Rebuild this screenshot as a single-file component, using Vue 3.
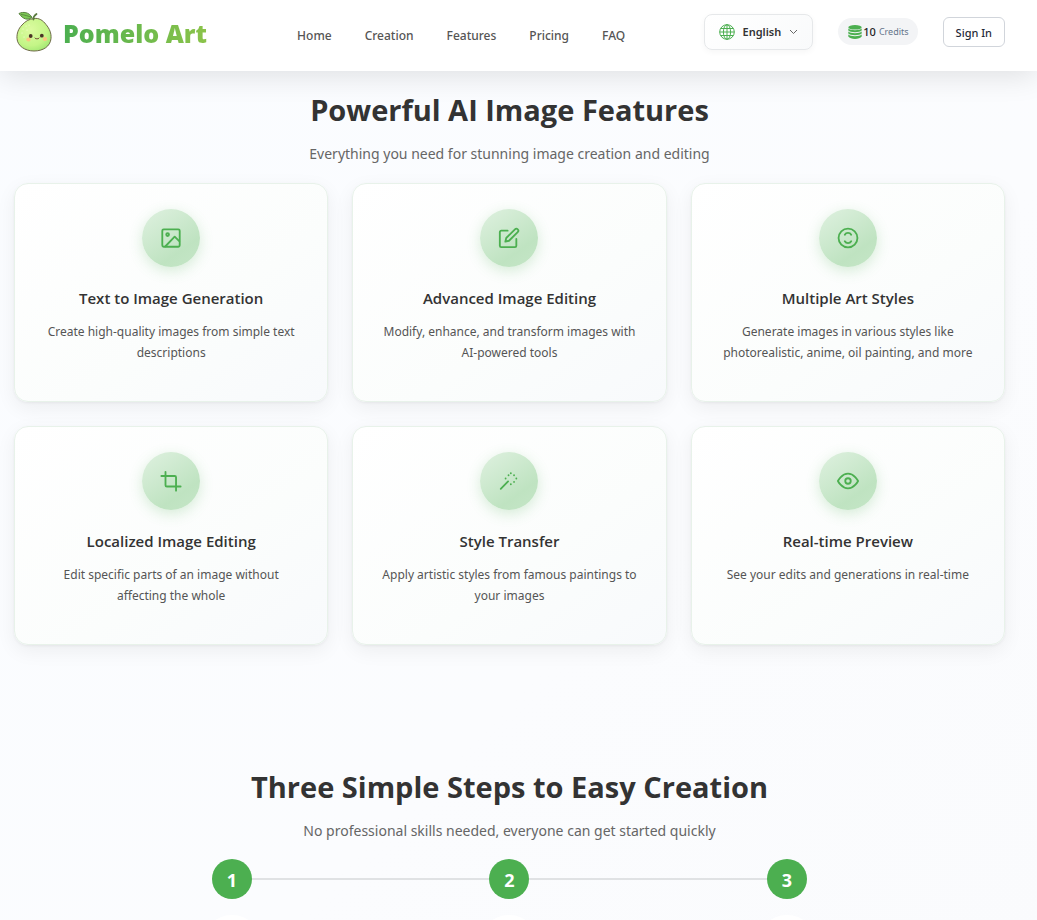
<script setup>
const nav = ['Home', 'Creation', 'Features', 'Pricing', 'FAQ']
const features = [
  { icon: 'image', title: 'Text to Image Generation', text: 'Create high-quality images from simple text descriptions' },
  { icon: 'edit', title: 'Advanced Image Editing', text: 'Modify, enhance, and transform images with AI-powered tools' },
  { icon: 'styles', title: 'Multiple Art Styles', text: 'Generate images in various styles like photorealistic, anime, oil painting, and more' },
  { icon: 'crop', title: 'Localized Image Editing', text: 'Edit specific parts of an image without affecting the whole' },
  { icon: 'wand', title: 'Style Transfer', text: 'Apply artistic styles from famous paintings to your images' },
  { icon: 'eye', title: 'Real-time Preview', text: 'See your edits and generations in real-time' }
]
const steps = [1, 2, 3]
</script>

<template>
  <div class="page">
    <header class="header">
      <a class="brand" href="#">
        <svg class="logo" viewBox="0 0 40 44" aria-hidden="true">
          <defs>
            <radialGradient id="fruit" cx=".4" cy=".35" r=".75">
              <stop offset="0" stop-color="#dcfba0" />
              <stop offset=".65" stop-color="#c4f587" />
              <stop offset="1" stop-color="#9be56f" />
            </radialGradient>
          </defs>
          <path d="M20 8.500c5-.8 9 2 12 6 3.500 4 5.500 9 5 14-.7 8-8 12.500-17 12.500S3.500 36 3 28.500c-.4-5 1.500-10 5-13.500 3-3.500 7-6 12-6.500z" fill="url(#fruit)" stroke="#6f6a48" stroke-width="1" />
          <path d="M19.500 9.500c-.5-2 1-4 3-5.500" fill="none" stroke="#5a7a3f" stroke-width="1.800" stroke-linecap="round" />
          <path d="M5 3.500C9 1.500 15 2 18 7.500c-4 3-9 2-13-4z" fill="#7cc956" stroke="#58803e" stroke-width="1" />
          <path d="M7 4.500c4 .5 7 1.500 10.500 2.800" fill="none" stroke="#55783b" stroke-width=".8" />
          <ellipse cx="14.500" cy="29.500" rx="2.200" ry="1.900" fill="#fbc680" />
          <ellipse cx="31" cy="29" rx="2.200" ry="1.900" fill="#fbc680" />
          <circle cx="16.700" cy="26" r="1.900" fill="#4a3426" />
          <circle cx="27.800" cy="25.700" r="1.900" fill="#4a3426" />
          <path d="M21 28q1 1.800 2 .6q1 1.200 2-.6" fill="none" stroke="#79553a" stroke-width="1" stroke-linecap="round" />
          <path d="M9 19h.1M12 16h.1M8 23h.1M13 20h.1M15 15h.1M10 27h.1" stroke="#f3ffd0" stroke-width="1.200" stroke-linecap="round" />
        </svg>
        <span class="brand-name">Pomelo Art</span>
      </a>
      <nav class="nav" aria-label="Main">
        <a v-for="item in nav" :key="item" href="#">{{ item }}</a>
      </nav>
      <div class="actions">
        <button class="language" type="button">
          <svg class="globe" viewBox="0 0 16 16" fill="none" stroke="#4caf50" aria-hidden="true">
            <circle cx="8" cy="8" r="7.300" />
            <ellipse cx="8" cy="8" rx="3.600" ry="7.300" />
            <path d="M8 .7v14.600M.7 8h14.600M1.700 4.500h12.600M1.700 11.500h12.600" />
          </svg>
          <span>English</span>
          <svg class="chevron" viewBox="0 0 9 9" fill="none" stroke="#666" aria-hidden="true"><path d="M1 3l3.500 3.500L8 3" /></svg>
        </button>
        <div class="credits">
          <svg class="coins" viewBox="0 0 14 14" fill="#4caf50" aria-hidden="true">
            <ellipse cx="7" cy="2.300" rx="6.700" ry="2.300" />
            <path d="M.3 3.600c2 2.300 11.400 2.300 13.400 0v2c-2 2.300-11.400 2.300-13.400 0z" />
            <path d="M.3 6.500c2 2.300 11.400 2.300 13.400 0v2c-2 2.300-11.400 2.300-13.400 0z" />
            <path d="M.3 9.500c2 2.300 11.400 2.300 13.400 0v2.100c-2 3.200-11.400 3.200-13.400 0z" />
          </svg>
          <span class="amount">10</span>
          <span class="unit">Credits</span>
        </div>
        <button class="sign-in" type="button">Sign In</button>
      </div>
    </header>

    <main class="main">
      <section>
        <h2>Powerful AI Image Features</h2>
        <p class="lead">Everything you need for stunning image creation and editing</p>
        <div class="grid">
          <article v-for="f in features" :key="f.title" class="card">
            <div class="badge">
              <svg viewBox="0 0 24 24" aria-hidden="true">
                <g v-if="f.icon === 'image'">
                  <rect x="2.500" y="2.500" width="19" height="19" rx="1.500" />
                  <circle cx="8.300" cy="8.300" r="1.500" />
                  <path d="M6 21L16 10.500l5 5" />
                </g>
                <g v-else-if="f.icon === 'edit'">
                  <path d="M10.500 4H3.500A1.500 1.500 0 0 0 2 5.500v15A1.500 1.500 0 0 0 3.500 22h15a1.500 1.500 0 0 0 1.500-1.500V13" />
                  <path d="M18.500 2.500a2.120 2.120 0 0 1 3 3L12 15l-4 1 1-4z" />
                </g>
                <g v-else-if="f.icon === 'styles'">
                  <circle cx="12" cy="12" r="10.300" />
                  <path d="M8.500 8.500c1.500-2.700 5.500-2.700 7 0M8.500 15.500c1.500 2.700 5.500 2.700 7 0" />
                </g>
                <g v-else-if="f.icon === 'crop'">
                  <path d="M6 2v14.500a1.500 1.500 0 0 0 1.500 1.500H22.500M1.500 6.500H16a1.500 1.500 0 0 1 1.500 1.500v14.500" />
                </g>
                <g v-else-if="f.icon === 'wand'">
                  <path d="M3 20.500l8-8" />
                  <path d="M14 3.500h.01M17.500 5.700h.01M20 9.300h.01M17.500 13h.01M14 15.500h.01M8.300 9.300h.01M11.500 5.700h.01" />
                </g>
                <g v-else>
                  <path d="M1 12s4-8 11-8 11 8 11 8-4 8-11 8-11-8-11-8z" />
                  <circle cx="12" cy="12" r="3" />
                </g>
              </svg>
            </div>
            <h3>{{ f.title }}</h3>
            <p>{{ f.text }}</p>
          </article>
        </div>
      </section>

      <section class="steps-section">
        <h2>Three Simple Steps to Easy Creation</h2>
        <p class="lead">No professional skills needed, everyone can get started quickly</p>
        <ol class="steps">
          <li v-for="s in steps" :key="s">
            <span class="number">{{ s }}</span>
            <span class="disc"></span>
          </li>
        </ol>
      </section>
    </main>
  </div>
</template>

<style>
body {
  background: #fbfcff;
}
</style>

<style scoped>
.page {
  font-family: "Segoe UI", "Noto Sans", "Open Sans", sans-serif;
  color: #333;
  background: linear-gradient(135deg, #fafcff 0%, #fbfcfe 60%, #fafbfd 100%);
}
.header {
  position: relative;
  box-sizing: border-box;
  display: flex;
  align-items: center;
  height: 71px;
  padding: 0 32px 8px 14px;
  background: #fff;
  box-shadow: 0 4px 30px rgba(0, 0, 0, 0.12);
}
.brand {
  display: flex;
  align-items: center;
  gap: 9px;
  text-decoration: none;
}
.logo {
  width: 40px;
  height: 44px;
}
.brand-name {
  padding-top: 2px;
  font-family: "Open Sans", sans-serif;
  font-size: 25px;
  line-height: 36px;
  font-weight: 800;
  white-space: nowrap;
  color: transparent;
  background: linear-gradient(90deg, #4caf50, #8bc34a);
  -webkit-background-clip: text;
  background-clip: text;
}
.nav {
  display: flex;
  gap: 33px;
  margin: 9px 0 0 90px;
}
.nav a {
  font-size: 12px;
  line-height: 20px;
  font-weight: 500;
  color: #555;
  text-decoration: none;
}
.actions {
  display: flex;
  align-items: center;
  gap: 25px;
  margin-left: auto;
}
button {
  font-family: inherit;
  cursor: pointer;
}
.language {
  display: flex;
  align-items: center;
  gap: 8px;
  height: 36px;
  padding: 0 14px;
  border: 1px solid #e6e8ea;
  border-radius: 8px;
  background: linear-gradient(135deg, #fff, #f9fafb);
  box-shadow: 0 2px 6px rgba(0, 0, 0, 0.04);
  color: #333;
  font-size: 11px;
  font-weight: 600;
}
.globe {
  width: 16px;
  height: 16px;
}
.chevron {
  width: 9px;
  height: 9px;
}
.credits {
  display: flex;
  align-items: center;
  height: 27px;
  padding: 0 9px 0 10px;
  border-radius: 14px;
  background: #f3f4f6;
}
.coins {
  width: 14px;
  height: 14px;
  margin-right: 1px;
}
.amount {
  margin-right: 3px;
  color: #222;
  font-size: 11px;
  font-weight: 500;
}
.unit {
  color: #64748b;
  font-size: 9px;
}
.sign-in {
  height: 30px;
  padding: 0 12px;
  border: 1px solid #d1d5db;
  border-radius: 6px;
  background: #fff;
  color: #1f2937;
  font-size: 11px;
  line-height: 30px;
  font-weight: 500;
}
.main {
  padding: 19px 32px 0 14px;
}
h2 {
  margin: 0;
  text-align: center;
  color: #333;
  font-family: "Open Sans", sans-serif;
  font-size: 29px;
  line-height: 40px;
  font-weight: 700;
}
.lead {
  margin: 13px 0 0;
  text-align: center;
  color: #666;
  font-size: 14px;
  line-height: 22px;
}
.grid {
  display: grid;
  grid-template-columns: repeat(3, 1fr);
  gap: 24px;
  margin-top: 18px;
}
.card {
  box-sizing: border-box;
  min-height: 219px;
  padding: 25px 24px;
  border: 1px solid #e8f2ea;
  border-radius: 14px;
  background: linear-gradient(145deg, #fff, #fbfdfc 60%, #f8fafc);
  box-shadow: 0 6px 20px rgba(0, 0, 0, 0.06), 0 1px 3px rgba(0, 0, 0, 0.05);
  text-align: center;
}
.badge {
  display: flex;
  align-items: center;
  justify-content: center;
  width: 58px;
  height: 58px;
  margin: 0 auto 18px;
  border-radius: 50%;
  background: linear-gradient(145deg, #dff1e0, #bfe3c1 70%, #c5e6c7);
  box-shadow: 0 4px 14px rgba(76, 175, 80, 0.22);
}
.badge svg {
  width: 22px;
  height: 22px;
  fill: none;
  stroke: #4caf50;
  stroke-width: 2;
  stroke-linecap: round;
  stroke-linejoin: round;
}
h3 {
  margin: 0;
  color: #333;
  font-family: "Open Sans", sans-serif;
  font-size: 15px;
  line-height: 26px;
  font-weight: 600;
}
.card p {
  margin: 10px 0 0;
  color: #555;
  font-size: 12px;
  line-height: 21px;
}
.steps-section {
  margin-top: 122px;
}
.steps {
  display: grid;
  grid-template-columns: repeat(3, 1fr);
  width: 84%;
  margin: 17px auto 0;
  padding: 0;
  list-style: none;
}
.steps li {
  position: relative;
  display: flex;
  flex-direction: column;
  align-items: center;
  gap: 16px;
}
.steps li + li::before {
  content: "";
  position: absolute;
  top: 19px;
  right: 50%;
  width: 100%;
  height: 2px;
  background: #e0e2e4;
}
.steps li:nth-child(2) {
  z-index: 1;
}
.steps li:first-child {
  z-index: 2;
}
.number {
  position: relative;
  width: 40px;
  height: 40px;
  border-radius: 50%;
  background: #4caf50;
  color: #fff;
  font-size: 18px;
  line-height: 42px;
  font-weight: 700;
  text-align: center;
}
.disc {
  width: 60px;
  height: 60px;
  border-radius: 50%;
  background: #fff;
}
</style>
